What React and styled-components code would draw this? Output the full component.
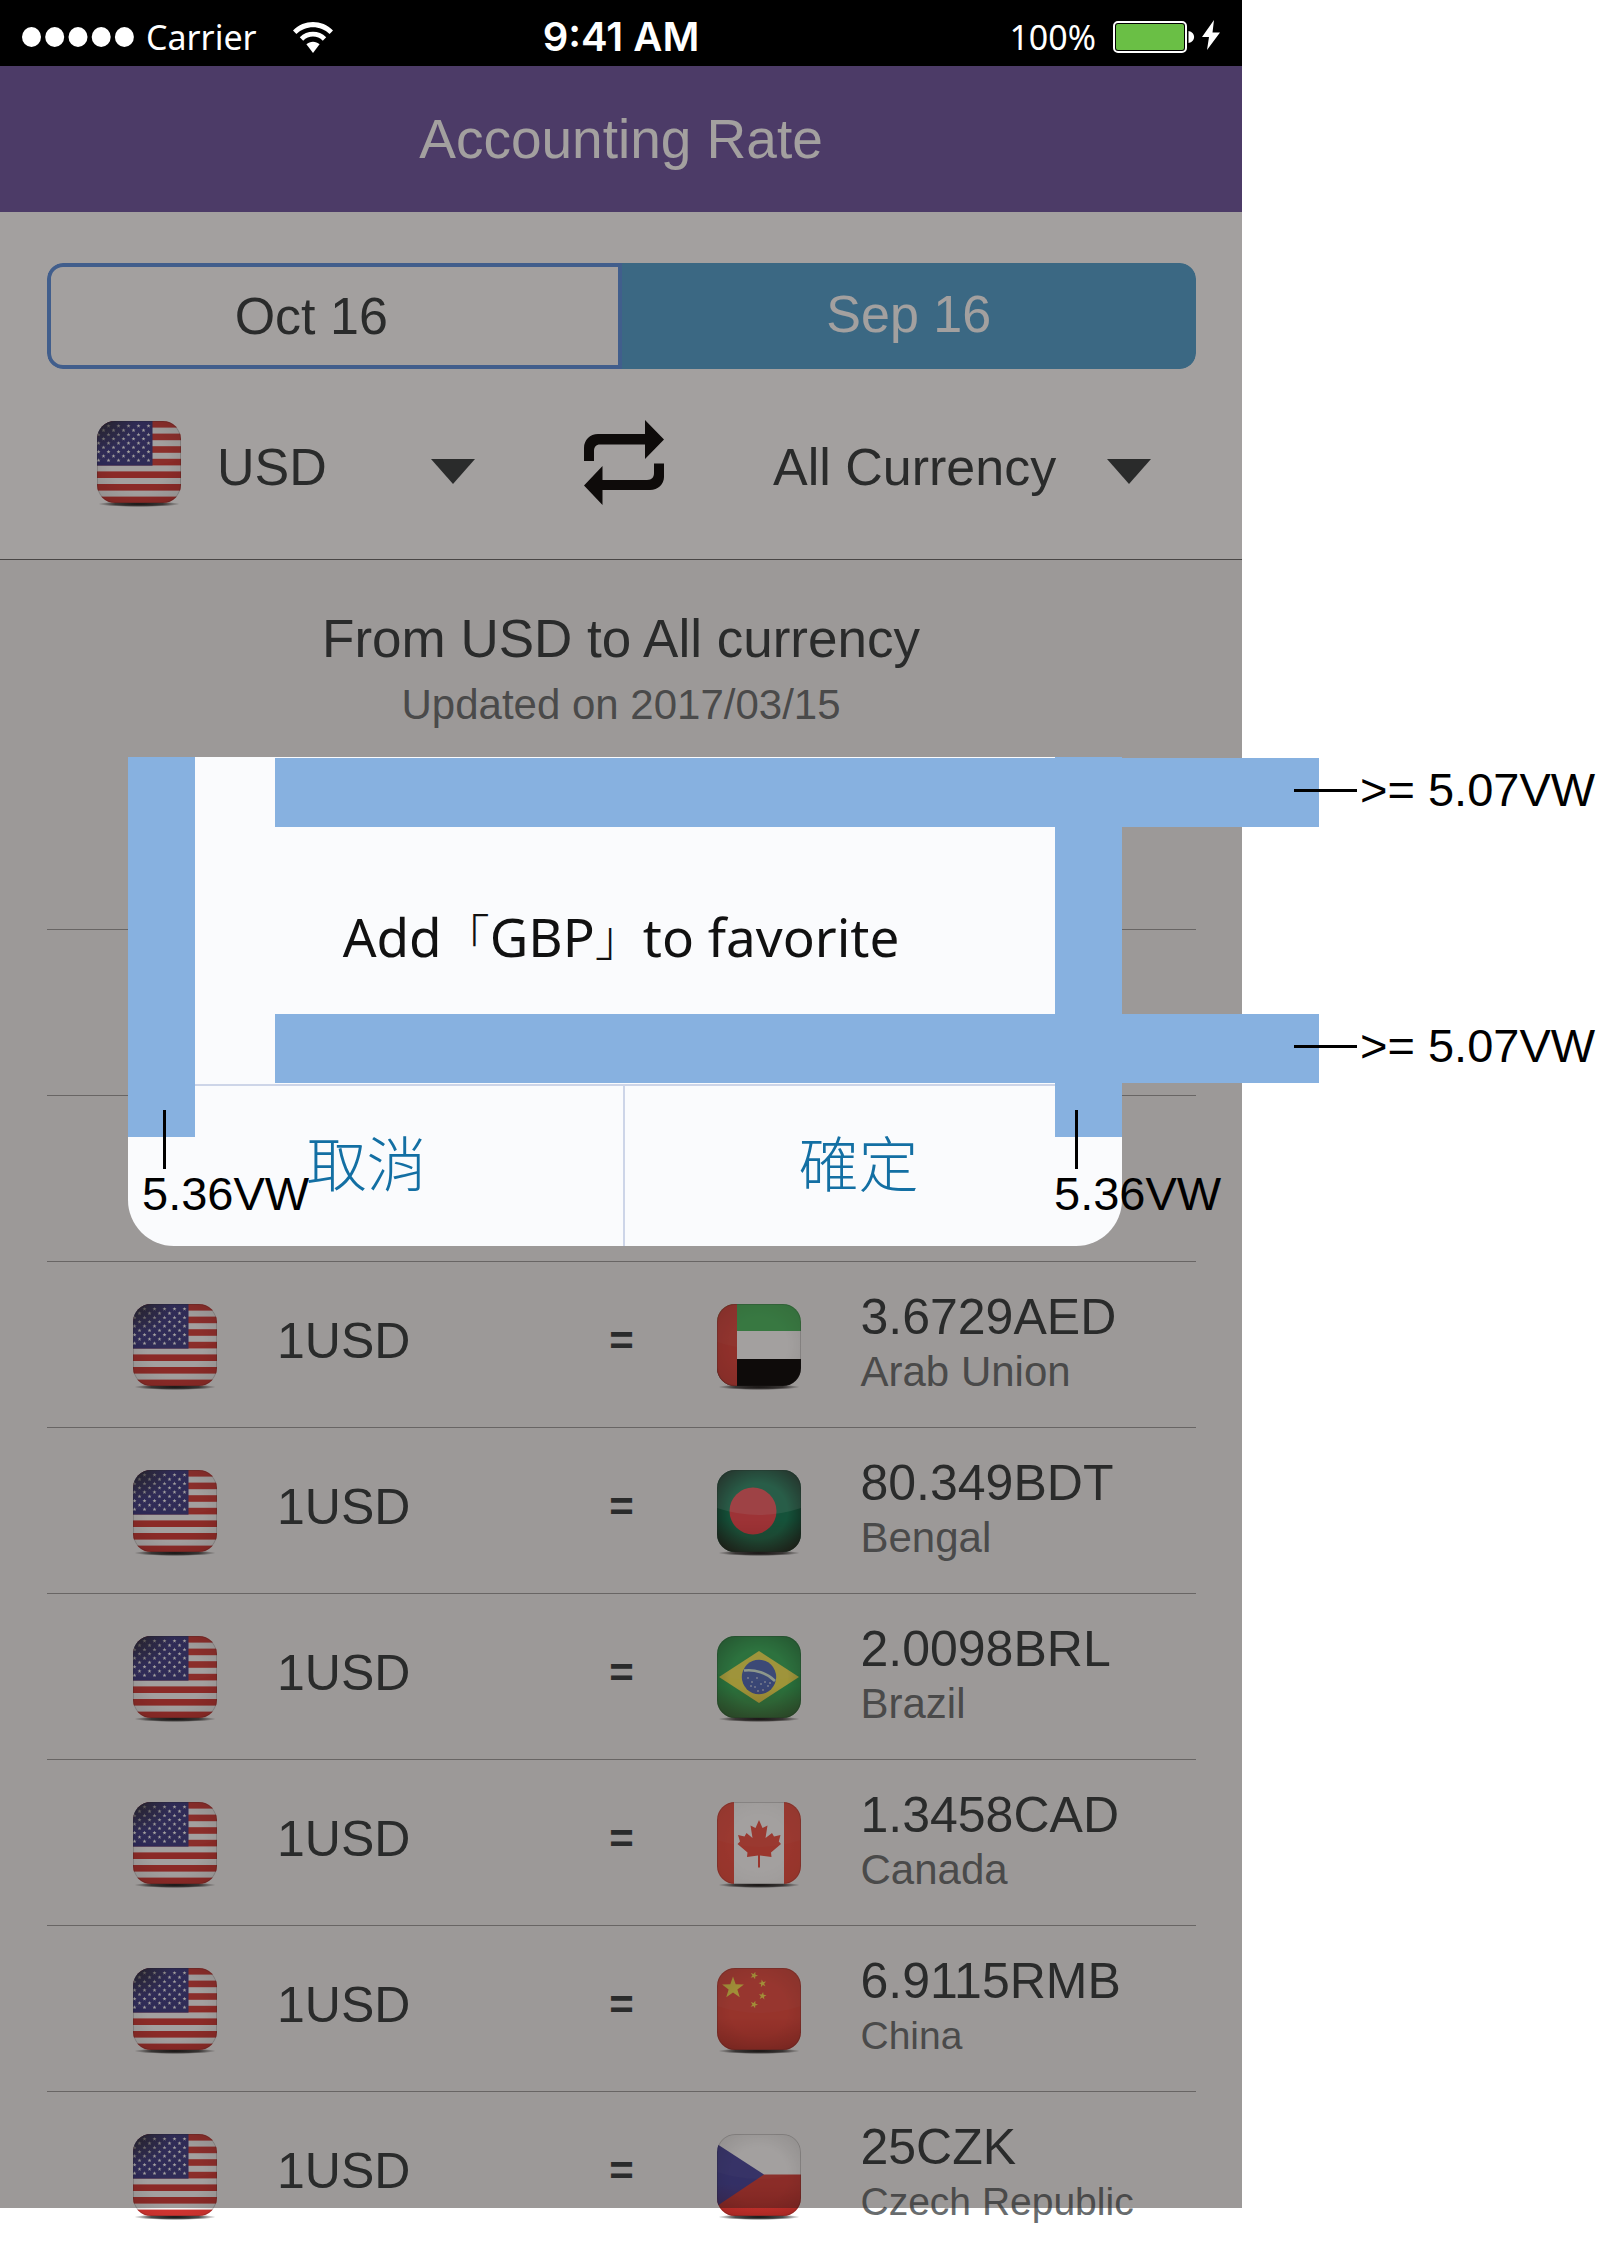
import React, { useId, useState } from "react";
import styled, { createGlobalStyle } from "styled-components";

const sans = '"Liberation Sans", Arial, sans-serif';
const humanist = '"Noto Sans", "Open Sans", "Noto Sans CJK TC", sans-serif';

const GlobalStyle = createGlobalStyle`
  *, *::before, *::after { box-sizing: border-box; }
  body { margin: 0; background: #fff; font-family: ${sans}; }
  button, select { font: inherit; color: inherit; margin: 0; padding: 0; border: 0; background: none; }
`;

/* ---------- page ---------- */

const Page = styled.div`
  display: grid;
  grid-template-columns: minmax(0, 1fr) 355px;
  align-items: start;
  min-height: 100vh;
  overflow: hidden;
`;

const Phone = styled.main`
  position: relative;
  display: flex;
  flex-direction: column;
  background: #f4f4f4;
  color: #31383a;
`;

const StatusBar = styled.div`
  position: relative;
  z-index: 2;
  display: grid;
  grid-template-columns: 1fr auto 1fr;
  align-items: center;
  height: 66px;
  padding: 0 22px;
  background: #000;
  color: #fff;
  font: 34px/48px ${humanist};
`;

const StatusGroup = styled.div`
  display: flex;
  align-items: center;
  justify-content: ${(p) => (p.$end ? "flex-end" : "flex-start")};
  gap: ${(p) => p.$gap}px;
  padding-top: 8px;
`;

const Clock = styled.time`
  padding-top: 8px;
  font: 600 40px/48px Inter, sans-serif;
`;

const Header = styled.header`
  display: flex;
  align-items: center;
  justify-content: center;
  height: 146px;
  background: #6b52a0;
  color: #fff;
`;

const Title = styled.h1`
  margin: 0;
  font-size: 55px;
  line-height: 64px;
  font-weight: 400;
`;

const Filters = styled.section`
  padding: 51px 0 52px;
  background: #fff;
  border-bottom: 1px solid #666;
`;

const Segments = styled.div`
  display: grid;
  grid-template-columns: 1fr 1fr;
  height: 106px;
  margin: 0 46px 52px 47px;
  border-radius: 16px;
  overflow: hidden;
`;

const Segment = styled.button`
  padding: ${(p) => (p.$first ? "0 46px 0 0" : "0 0 4px")};
  border: ${(p) => (p.$active ? "0" : "4px solid #588ede")};
  border-radius: ${(p) => (p.$first ? "16px 0 0 16px" : "0 16px 16px 0")};
  background: ${(p) => (p.$active ? "#4ea0d0" : "transparent")};
  color: ${(p) => (p.$active ? "#fff" : "inherit")};
  font-size: 52px;
  line-height: 60px;
`;

const Controls = styled.div`
  display: flex;
  align-items: center;
  justify-content: space-between;
  height: 86px;
  padding: 0 91px 0 97px;
`;

const Picker = styled.label`
  position: relative;
  display: flex;
  align-items: center;
  gap: 36px;
  flex: 0 0 378px;
`;

const Select = styled.select`
  appearance: none;
  flex: 1;
  min-width: 0;
  height: 86px;
  padding-top: 6px;
  font-size: 52px;
  line-height: 64px;
`;

const Chevron = styled.svg`
  position: absolute;
  right: 0;
  top: 38px;
  pointer-events: none;
`;

const SwapButton = styled.button`
  display: flex;
  padding-bottom: 4px;
`;

const Summary = styled.section`
  padding: 45px 24px 27px;
  text-align: center;
`;

const SummaryTitle = styled.h2`
  margin: 0;
  font-size: 53px;
  line-height: 68px;
  font-weight: 400;
`;

const Updated = styled.p`
  margin: 0;
  font-size: 42px;
  line-height: 64px;
  color: #686c6e;
`;

/* ---------- rates ---------- */

const RateArea = styled.div`
  margin: 0 46px -50px 47px;
`;

const RateTable = styled.table`
  width: 100%;
  table-layout: fixed;
  border-collapse: separate;
  border-spacing: 0;
`;

const Cell = styled.td`
  height: 166px;
  width: ${(p) => p.$width || "auto"};
  padding: 0 0 8px ${(p) => p.$indent || 0}px;
  border-bottom: 1px solid ${(p) => (p.$last ? "transparent" : "#9a9a9a")};
  vertical-align: middle;
  text-align: ${(p) => p.$align || "left"};
  font-size: ${(p) => p.$size || 50}px;
  line-height: 60px;
  white-space: nowrap;
`;

const CellRow = styled.div`
  display: flex;
  align-items: center;
  gap: 60px;

  > svg { margin-top: 12px; flex: none; }
`;

const Equals = styled.span`
  font-weight: 700;
`;

const Quote = styled.div`
  padding-top: 2px;
`;

const Country = styled.div`
  font-size: ${(p) => (p.$compact ? 39 : 42)}px;
  line-height: 50px;
  color: #686c6e;
`;

/* ---------- dialog ---------- */

const Backdrop = styled.div`
  position: absolute;
  inset: 0;
  z-index: 1;
  padding: 757px 120px 0 128px;
  background: rgba(34, 26, 23, 0.416);
`;

const Dialog = styled.div`
  position: relative;
  background: #fafbfd;
  border-radius: 0 0 46px 46px;
`;

const Message = styled.p`
  display: flex;
  align-items: center;
  justify-content: center;
  height: 327px;
  margin: 0;
  padding: 32px 8px 0 0;
  color: #111;
  font: 53px/72px ${humanist};
`;

const Bracket = styled.span`
  font-size: 48px;
  font-weight: 300;
`;

const Actions = styled.div`
  display: grid;
  grid-template-columns: 1fr 1fr;
  height: 162px;
  border-top: 2px solid #cdd5e8;
`;

const Action = styled.button`
  padding: 0 ${(p) => (p.$first ? 18 : 30)}px 10px 0;
  border-right: ${(p) => (p.$first ? "2px solid #cdd5e8" : "0")};
  color: #136fa3;
  font: 300 60px/80px "Noto Sans CJK TC", sans-serif;
`;

/* ---------- spacing marks ---------- */

const Band = styled.div`
  position: absolute;
  background: #87b1e0;
`;

const SideBand = styled(Band)`
  top: 0;
  ${(p) => p.$side}: 0;
  width: 67px;
  height: 380px;
`;

const CrossBand = styled(Band)`
  top: ${(p) => p.$top}px;
  left: 147px;
  right: -197px;
  height: 69px;
`;

const Note = styled.div`
  position: absolute;
  display: flex;
  color: #000;
  font-size: 47px;
  line-height: 50px;
  white-space: nowrap;
`;

const CrossNote = styled(Note)`
  top: ${(p) => p.$top}px;
  left: calc(100% + 172px);
  height: 66px;
  align-items: center;
  gap: 3px;

  &::before { content: ""; width: 63px; height: 3px; background: #000; }
`;

const SideNote = styled(Note)`
  top: 353px;
  left: ${(p) => p.$left};
  flex-direction: column;

  &::before { content: ""; width: 3px; height: 59px; margin-left: 21px; background: #000; }
`;

/* ---------- drawings ---------- */

function star(cx, cy, r, turn = 0) {
  const pts = [];
  for (let i = 0; i < 10; i++) {
    const a = ((i * 36 - 90 + turn) * Math.PI) / 180;
    const d = i % 2 ? r * 0.4 : r;
    pts.push(`${(cx + d * Math.cos(a)).toFixed(2)},${(cy + d * Math.sin(a)).toFixed(2)}`);
  }
  return pts.join(" ");
}

const usStars = [];
for (let row = 0; row < 9; row++) {
  const start = row === 0 ? 11.5 : row % 2 ? 6.5 : 1.5;
  for (let x = start; x < 54; x += 10) usStars.push([x, 5 + row * 4.3]);
}

const flagArt = {
  us: (
    <>
      <rect width="84" height="82" fill="#fff" />
      {[0, 1, 2, 3, 4, 5, 6].map((i) => (
        <rect key={i} y={i * 12.6} width="84" height="6.6" fill="#d63632" />
      ))}
      <rect width="55.5" height="44.6" fill="#353382" />
      {usStars.map(([x, y], i) => (
        <polygon key={i} points={star(x, y, 2.1)} fill="#fff" />
      ))}
    </>
  ),
  ae: (
    <>
      <rect width="84" height="82" fill="#fff" />
      <rect width="84" height="27" fill="#43b95a" />
      <rect y="55" width="84" height="27" fill="#000" />
      <rect width="20" height="82" fill="#de4038" />
    </>
  ),
  bd: (
    <>
      <rect width="84" height="82" fill="#0c7a52" />
      <circle cx="36" cy="41" r="23.5" fill="#f5454c" />
    </>
  ),
  br: (
    <>
      <rect width="84" height="82" fill="#2fae55" />
      <path d="M2 41 42 15 82 41 42 67Z" fill="#f8ea50" />
      <circle cx="42" cy="41" r="17.2" fill="#4a66b8" />
      <path d="M27 34.5C38 33 50 37 58 45" fill="none" stroke="#d8f0dc" strokeWidth="2.6" />
      {[[31, 42], [35, 46], [40, 42], [38, 51], [44, 48], [48, 46], [51, 50], [46, 54], [41, 55], [34, 50], [53, 47]].map(([x, y]) => (
        <circle key={`${x}-${y}`} cx={x} cy={y} r="0.8" fill="#fff" />
      ))}
    </>
  ),
  ca: (
    <>
      <rect width="84" height="82" fill="#fff" />
      <rect width="17" height="82" fill="#f04a3c" />
      <rect x="67" width="17" height="82" fill="#f04a3c" />
      <path
        d="M42 18 45.5 26 50.5 23.5 48.5 36 55 31 57 34.5 63.5 33 61.8 39.5 64 42 54 50.5 54.5 55 43 53.5V65.5H41V53.5L30 55 30.5 50.5 20.5 42 23 39.5 21 33 27.5 34.5 29.5 31 35.5 36 33.5 23.5 38.5 26Z"
        fill="#f04a3c"
      />
    </>
  ),
  cn: (
    <>
      <rect width="84" height="82" fill="#ea463a" />
      <polygon points={star(16, 20, 11.5)} fill="#fbe04a" />
      <polygon points={star(37, 7.5, 4, 20)} fill="#fbe04a" />
      <polygon points={star(45.5, 15.5, 4, -12)} fill="#fbe04a" />
      <polygon points={star(45.5, 28, 4, 8)} fill="#fbe04a" />
      <polygon points={star(37, 36.5, 4, 20)} fill="#fbe04a" />
    </>
  ),
  cz: (
    <>
      <rect width="84" height="41" fill="#fff" />
      <rect y="40.5" width="84" height="42" fill="#d63a34" />
      <path d="M0 10 47 40.5 0 72Z" fill="#403f9c" />
    </>
  ),
};

const edgeShade = { us: 0.12, ae: 0.1, bd: 0.75, br: 0.3, ca: 0.05, cn: 0.12, cz: 0.12 };
const lowerShade = { us: false, ae: false, bd: true, br: true, ca: false, cn: true, cz: true };

function Flag({ code, label }) {
  const id = useId().replace(/[^a-zA-Z0-9]/g, "");
  return (
    <svg width="84" height="86" viewBox="0 0 84 86" role="img" aria-label={label}>
      <defs>
        <clipPath id={`c${id}`}>
          <rect width="84" height="82" rx="18" />
        </clipPath>
        <radialGradient id={`s${id}`} cx="50%" cy="50%" r="68%">
          <stop offset="50%" stopColor="#000" stopOpacity="0" />
          <stop offset="100%" stopColor="#000" stopOpacity={edgeShade[code]} />
        </radialGradient>
        <radialGradient id={`d${id}`}>
          <stop offset="0%" stopColor="#000" stopOpacity="0.95" />
          <stop offset="60%" stopColor="#000" stopOpacity="0.7" />
          <stop offset="100%" stopColor="#000" stopOpacity="0" />
        </radialGradient>
        <linearGradient id={`b${id}`} x1="0" y1="0" x2="0" y2="1">
          <stop offset="0%" stopColor="#800" stopOpacity="0" />
          <stop offset="100%" stopColor="#500" stopOpacity="0.25" />
        </linearGradient>
        <radialGradient id={`k${id}`} cx="0" cy="0" r="0.7">
          <stop offset="0%" stopColor="#222" stopOpacity="0.8" />
          <stop offset="100%" stopColor="#222" stopOpacity="0" />
        </radialGradient>
      </defs>
      <ellipse cx="42" cy="83" rx="41" ry="3" fill={`url(#d${id})`} />
      <g clipPath={`url(#c${id})`}>
        {flagArt[code]}
        <rect width="84" height="82" fill={`url(#s${id})`} />
        {lowerShade[code] && <rect y="50" width="84" height="32" fill={`url(#b${id})`} />}
        {code === "us" && <rect width="55.5" height="44.6" fill={`url(#k${id})`} />}
        <path d="M0 0H84V38Q42 52 0 38Z" fill="#fff" opacity={code === "bd" ? 0.14 : 0.03} />
        <rect x="0.5" y="0.5" width="83" height="81" rx="17.5" fill="none" stroke="#222" strokeOpacity="0.2" />
      </g>
    </svg>
  );
}

const SignalDots = () => (
  <svg width="112" height="20" viewBox="0 0 112 20" role="img" aria-label="Signal">
    {[9.5, 32.7, 56, 79.2, 102.4].map((x) => (
      <ellipse key={x} cx={x} cy="10" rx="9.5" ry="10" fill="#fff" />
    ))}
  </svg>
);

const Wifi = () => (
  <svg width="64" height="31" viewBox="-24 0 64 31" role="img" aria-label="Wi-Fi">
    <path d="M0 8.5C11-2.800 29-2.800 40 8.500L36.600 12C27.500 3 12.500 3 3.400 12Z" fill="#fff" />
    <path d="M6.800 15.200C14 8 26 8 33.200 15.200L29.800 18.700C24.500 13.200 15.500 13.200 10.200 18.700Z" fill="#fff" />
    <path d="M13.400 22.300C17 18.900 23 18.900 26.600 22.300L20 31Z" fill="#fff" />
  </svg>
);

const Battery = () => (
  <svg width="107" height="34" viewBox="0 0 107 34" role="img" aria-label="Battery charging">
    <rect x="1" y="2" width="72" height="30" rx="4" fill="none" stroke="#fff" strokeWidth="2" />
    <rect x="3" y="4" width="68" height="26" rx="2" fill="#6abf45" />
    <path d="M75.5 11C83 12 83 22 75.5 23Z" fill="#fff" />
    <path d="M101 0 89 17H96L94 30 107 12.5H99.5Z" fill="#fff" />
  </svg>
);

const SwapIcon = () => (
  <svg width="80" height="85" viewBox="0 0 80 85" aria-hidden="true">
    <path d="M0 41V28C0 20 6 14 14 14H61V0L80 19.5 61 39V24.5H16C12 24.5 10 27 10 31V41Z" fill="#000" />
    <path d="M80 43.5V57C80 64 74 70 66 70H18.5V85L0 65.5 18.5 46V60H63C68 60 70 57 70 53V43.5Z" fill="#000" />
  </svg>
);

const Triangle = () => (
  <Chevron width="44" height="25" viewBox="0 0 44 25" aria-hidden="true">
    <path d="M0 0H44L22 25Z" fill="#31383a" />
  </Chevron>
);

/* ---------- data ---------- */

const coveredRows = ["first", "second", "third"];

const rates = [
  { code: "ae", value: "3.6729AED", country: "Arab Union" },
  { code: "bd", value: "80.349BDT", country: "Bengal" },
  { code: "br", value: "2.0098BRL", country: "Brazil" },
  { code: "ca", value: "1.3458CAD", country: "Canada" },
  { code: "cn", value: "6.9115RMB", country: "China", compact: true },
  { code: "cz", value: "25CZK", country: "Czech Republic", compact: true },
];

const months = ["Oct 16", "Sep 16"];

export default function App() {
  const [month, setMonth] = useState("Sep 16");

  return (
    <>
      <GlobalStyle />
      <Page>
        <Phone>
          <StatusBar>
            <StatusGroup $gap={12}>
              <SignalDots />
              <span>Carrier</span>
              <Wifi />
            </StatusGroup>
            <Clock>9:41 AM</Clock>
            <StatusGroup $end $gap={17}>
              <span>100%</span>
              <Battery />
            </StatusGroup>
          </StatusBar>

          <Header>
            <Title>Accounting Rate</Title>
          </Header>

          <Filters>
            <Segments>
              {months.map((m, i) => (
                <Segment
                  key={m}
                  type="button"
                  $first={i === 0}
                  $active={m === month}
                  aria-pressed={m === month}
                  onClick={() => setMonth(m)}
                >
                  {m}
                </Segment>
              ))}
            </Segments>
            <Controls>
              <Picker>
                <Flag code="us" label="United States" />
                <Select aria-label="From currency" defaultValue="USD">
                  <option>USD</option>
                </Select>
                <Triangle />
              </Picker>
              <SwapButton type="button" aria-label="Swap currencies">
                <SwapIcon />
              </SwapButton>
              <Picker>
                <Select aria-label="To currency" defaultValue="All Currency">
                  <option>All Currency</option>
                </Select>
                <Triangle />
              </Picker>
            </Controls>
          </Filters>

          <Summary>
            <SummaryTitle>From USD to All currency</SummaryTitle>
            <Updated>Updated on 2017/03/15</Updated>
          </Summary>

          <RateArea>
            <RateTable>
              <tbody>
                {coveredRows.map((name) => (
                  <tr key={name}>
                    <Cell />
                    <Cell $width="64px" />
                    <Cell />
                  </tr>
                ))}
                {rates.map((r, i) => (
                  <tr key={r.code}>
                    <Cell $indent={86} $last={i === rates.length - 1}>
                      <CellRow>
                        <Flag code="us" label="United States" />
                        <span>1USD</span>
                      </CellRow>
                    </Cell>
                    <Cell $align="center" $size={42} $last={i === rates.length - 1}>
                      <Equals>=</Equals>
                    </Cell>
                    <Cell $indent={63} $last={i === rates.length - 1}>
                      <CellRow>
                        <Flag code={r.code} label={r.country} />
                        <Quote>
                          <div>{r.value}</div>
                          <Country $compact={r.compact}>{r.country}</Country>
                        </Quote>
                      </CellRow>
                    </Cell>
                  </tr>
                ))}
              </tbody>
            </RateTable>
          </RateArea>

          <Backdrop>
            <Dialog role="dialog" aria-modal="true" aria-labelledby="favorite-message">
              <Message id="favorite-message">
                Add<Bracket>「</Bracket>GBP<Bracket>」</Bracket>to favorite
              </Message>
              <Actions>
                <Action type="button" $first>取消</Action>
                <Action type="button">確定</Action>
              </Actions>
              <SideBand $side="left" />
              <SideBand $side="right" />
              <CrossBand $top={1} />
              <CrossBand $top={257} />
              <CrossNote $top={0}>&gt;= 5.07VW</CrossNote>
              <CrossNote $top={256}>&gt;= 5.07VW</CrossNote>
              <SideNote $left="14px">5.36VW</SideNote>
              <SideNote $left="calc(100% - 68px)">5.36VW</SideNote>
            </Dialog>
          </Backdrop>
        </Phone>
      </Page>
    </>
  );
}
